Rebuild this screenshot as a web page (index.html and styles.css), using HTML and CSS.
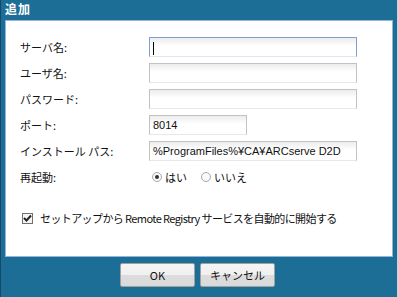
FILE: index.html
```html
<!DOCTYPE html>
<html lang="ja">
<head>
  <meta charset="UTF-8" />
  <title>追加</title>
  <link rel="stylesheet" href="styles.css">
</head>
<body>
  <div class="dialog">
    <!-- タイトル -->
    <div class="title">追加</div>

    <!-- 入力フォーム -->
    <div class="panel">
      <div class="form">
        <label class="label">サーバ名:</label>
        <div class="input focused"><span class="caret"></span></div>

        <label class="label">ユーザ名:</label>
        <div class="input"></div>

        <label class="label">パスワード:</label>
        <div class="input"></div>

        <label class="label">ポート:</label>
        <div class="input short">8014</div>

        <label class="label">インストール パス:</label>
        <div class="input">%ProgramFiles%¥CA¥ARCserve D2D</div>

        <label class="label">再起動:</label>
        <div class="radios">
          <span class="radio checked"></span><span class="radio-text">はい</span>
          <span class="radio"></span><span class="radio-text">いいえ</span>
        </div>
      </div>

      <div class="check-row">
        <span class="checkbox">
          <svg width="9" height="9" viewBox="0 0 9 9"><path d="M1 4 L3.5 6.5 L8 1.5" fill="none" stroke="#222" stroke-width="2"/></svg>
        </span>
        <span class="check-text">セットアップから Remote Registry サービスを自動的に開始する</span>
      </div>
    </div>

    <!-- ボタン -->
    <div class="buttons">
      <button class="btn">OK</button>
      <button class="btn">キャンセル</button>
    </div>
  </div>
</body>
</html>
```

FILE: styles.css
```css
html, body {
  margin: 0;
  padding: 0;
  height: 100%;
  font-family: "Noto Sans CJK JP", "Liberation Sans", sans-serif;
  font-size: 11px;
  color: #111;
}

.dialog {
  height: 297px;
  box-sizing: border-box;
  background: #1d6e96;
  border-left: 1px solid #124a66;
  border-right: 1px solid #c9d6e0;
  padding: 0 4px;
  display: flex;
  flex-direction: column;
}

.title {
  height: 20px;
  line-height: 18px;
  color: #fff;
  font-weight: bold;
  font-size: 12px;
  letter-spacing: 1px;
}

.panel {
  height: 237px;
  box-sizing: border-box;
  background: #fff;
  border: 1px solid #93b4dc;
  padding: 16px 0 0 14px;
}

.form {
  display: grid;
  grid-template-columns: 129px 208px;
  grid-auto-rows: 20px;
  row-gap: 6px;
  align-items: center;
}

.label {
  line-height: 20px;
  align-self: start;
}

.input {
  height: 20px;
  box-sizing: border-box;
  border: 1px solid #c0c2c8;
  border-bottom-color: #e8e8e8;
  background: linear-gradient(#ececec, #fff 8px);
  padding: 0 3px;
  line-height: 19px;
  font-family: "Liberation Sans", "Noto Sans CJK JP", sans-serif;
  font-size: 11px;
  white-space: nowrap;
  overflow: hidden;
}
.input.focused {
  border-color: #7f9fcc;
  border-bottom-color: #e0e8f0;
}
.input.short {
  width: 98px;
}
.caret {
  display: inline-block;
  width: 1px;
  height: 13px;
  background: #000;
  vertical-align: middle;
}

.radios {
  display: flex;
  align-items: center;
  height: 14px;
  padding-left: 3px;
}
.radio {
  width: 10px;
  height: 10px;
  box-sizing: border-box;
  border: 1px solid #a8a8a8;
  border-radius: 50%;
  background: #fafafa;
  position: relative;
}
.radio.checked::after {
  content: '';
  position: absolute;
  left: 2px;
  top: 2px;
  width: 4px;
  height: 4px;
  border-radius: 50%;
  background: #333;
}
.radio-text {
  margin: 0 14px 0 3px;
}

.check-row {
  display: flex;
  align-items: center;
  margin: 24px 0 0 2px;
  height: 14px;
}
.check-text {
  letter-spacing: -0.6px;
}
.checkbox {
  width: 11px;
  height: 11px;
  box-sizing: border-box;
  border: 1px solid #707070;
  background: #f4f4f4;
  display: flex;
  align-items: center;
  justify-content: center;
  margin-right: 7px;
}

.buttons {
  display: flex;
  gap: 5px;
  justify-content: center;
  padding-top: 6px;
  padding-right: 3px;
}
.btn {
  width: 75px;
  height: 24px;
  margin: 0;
  padding: 0;
  border: 1px solid #a0a0a0;
  border-radius: 2px;
  background: linear-gradient(#f4f4f4 0, #f0f0f0 50%, #dcdcdc 50%, #dadada 100%);
  font-family: "Noto Sans CJK JP", "Liberation Sans", sans-serif;
  font-size: 11px;
  color: #111;
}
```
